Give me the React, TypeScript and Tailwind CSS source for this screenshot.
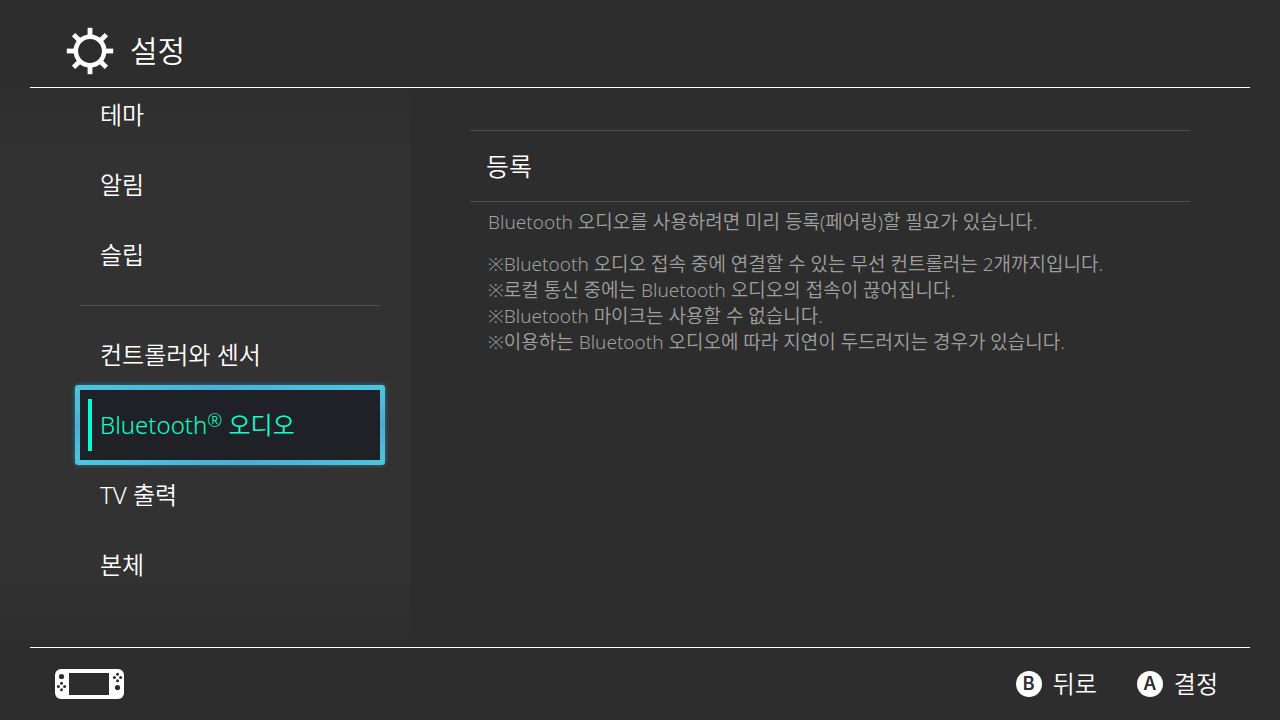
import clsx from "clsx"

type TMenuItem = {
  label: string
  mark?: string
  rest?: string
  selected?: boolean
}

const upperItems: TMenuItem[] = [
  { label: "테마" },
  { label: "알림" },
  { label: "슬립" },
]

const lowerItems: TMenuItem[] = [
  { label: "컨트롤러와 센서" },
  { label: "Bluetooth", mark: "®", rest: " 오디오", selected: true },
  { label: "TV 출력" },
  { label: "본체" },
]

const notes = [
  "※Bluetooth 오디오 접속 중에 연결할 수 있는 무선 컨트롤러는 2개까지입니다.",
  "※로컬 통신 중에는 Bluetooth 오디오의 접속이 끊어집니다.",
  "※Bluetooth 마이크는 사용할 수 없습니다.",
  "※이용하는 Bluetooth 오디오에 따라 지연이 두드러지는 경우가 있습니다.",
]

const teeth = [0, 45, 90, 135, 180, 225, 270, 315]

const GearIcon = () => (
  <svg className="size-12" viewBox="0 0 48 48" aria-hidden="true">
    <circle cx="24" cy="24" r="14.2" fill="none" stroke="#fff" strokeWidth="4.6" />
    {teeth.map((angle) => (
      <rect key={angle} x="21.6" y="0.8" width="4.8" height="8.4" fill="#fff" transform={`rotate(${angle} 24 24)`} />
    ))}
  </svg>
)

const ConsoleIcon = () => (
  <svg className="h-[30px] w-[70px]" viewBox="0 0 70 30" role="img" aria-label="Console">
    <rect width="69" height="30" rx="6" fill="#fff" />
    <g fill="#2d2d2d">
      <rect x="14" y="4" width="40" height="22" />
      <circle cx="6.5" cy="7.5" r="2.6" />
      <circle cx="62.5" cy="18.5" r="2.6" />
      <circle cx="6.5" cy="14.2" r="1.5" />
      <circle cx="3.4" cy="17.5" r="1.5" />
      <circle cx="9.6" cy="17.5" r="1.5" />
      <circle cx="6.5" cy="20.8" r="1.5" />
      <circle cx="62.5" cy="5.2" r="1.5" />
      <circle cx="59.4" cy="8.5" r="1.5" />
      <circle cx="65.6" cy="8.5" r="1.5" />
      <circle cx="62.5" cy="11.8" r="1.5" />
    </g>
  </svg>
)

const MenuItem = ({ item }: { item: TMenuItem }) => (
  <li
    className={clsx(
      item.selected &&
        "-m-[5px] rounded-[3px] bg-linear-[165deg,#4fc4dc,#4cb0dc_25%,#4fc4e0_50%,#4cacd8_75%,#4fc4dc] p-[5px] shadow-[0_0_4px_#2b7f8c]"
    )}
  >
    <button
      type="button"
      aria-current={item.selected ? "page" : undefined}
      className={clsx(
        "flex h-[70px] w-full items-center gap-2 pl-2 text-left text-2xl",
        item.selected ? "bg-[#202127] text-[#0fffca]" : "text-white"
      )}
    >
      <span className={clsx("h-[52px] w-1", item.selected && "bg-[#00ffcc]")} />
      <span className="whitespace-pre">
        {item.label}
        {item.mark && <sup className="-top-[7px] text-lg leading-none">{item.mark}</sup>}
        {item.rest}
      </span>
    </button>
  </li>
)

const ButtonHint = ({ letter, text }: { letter: string; text: string }) => (
  <button type="button" className="flex items-center gap-[11px] text-2xl text-white">
    <span className="flex size-[26px] items-center justify-center rounded-full bg-white font-['Inter',sans-serif] text-lg font-semibold leading-none text-[#2d2d2d]">
      {letter}
    </span>
    {text}
  </button>
)

const App = () => {
  return (
    <div className="flex min-h-screen flex-col bg-[#2d2d2d] font-['Noto_Sans','Noto_Sans_CJK_KR',sans-serif] font-[350] text-white">
      <header className="mx-[30px] flex h-[88px] items-center gap-4 border-b border-white pl-9 pt-[14px]">
        <GearIcon />
        <h1 className="text-[30px] leading-10">설정</h1>
      </header>

      <div className="flex flex-1">
        <nav className="w-[410px] shrink-0 overflow-hidden bg-linear-[to_bottom,#2d2d2d,#323232_60px,#323232_490px,#2d2d2d] pl-20 pr-[30px]">
          <ul className="-mt-2">
            {upperItems.map((item) => (
              <MenuItem key={item.label} item={item} />
            ))}
          </ul>
          <hr className="mb-[14px] mt-[15px] border-[#505050]" />
          <ul className="mb-[5px]">
            {lowerItems.map((item) => (
              <MenuItem key={item.label} item={item} />
            ))}
          </ul>
        </nav>

        <main className="flex-1 pl-[60px] pr-[90px] pt-[42px]">
          <button type="button" className="h-[72px] w-full border-y border-[#505050] pl-4 pt-0.5 text-left text-[25px]">
            등록
          </button>
          <div className="flex flex-col gap-4 pl-[18px] pt-[7px] text-[19px] leading-[26px] text-[#a0a0a0]">
            <p>Bluetooth 오디오를 사용하려면 미리 등록(페어링)할 필요가 있습니다.</p>
            <ul>
              {notes.map((note) => (
                <li key={note}>{note}</li>
              ))}
            </ul>
          </div>
        </main>
      </div>

      <footer className="mx-[30px] flex h-[73px] items-center justify-between border-t border-white pl-[25px] pr-8">
        <ConsoleIcon />
        <div className="flex gap-10">
          <ButtonHint letter="B" text="뒤로" />
          <ButtonHint letter="A" text="결정" />
        </div>
      </footer>
    </div>
  )
}

export default App
